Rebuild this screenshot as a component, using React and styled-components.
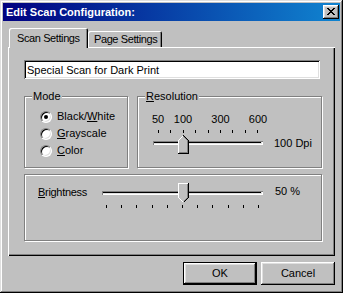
import React from 'react';
import styled, { createGlobalStyle } from 'styled-components';

const GlobalStyle = createGlobalStyle`
  html, body { margin: 0; padding: 0; background: #c0c0c0; }
  body { font-family: "Liberation Sans", Arial, sans-serif; font-size: 11px; color: #000; }
  * { box-sizing: border-box; }
`;

const Window = styled.div`
  width: 343px;
  height: 293px;
  padding: 3px;
  background: #c0c0c0;
  display: flex;
  flex-direction: column;
  box-shadow: inset -1px -1px #000, inset 1px 1px #dfdfdf, inset -2px -2px #808080, inset 2px 2px #fff;
`;

const TitleBar = styled.div`
  height: 18px;
  flex: none;
  display: flex;
  align-items: center;
  justify-content: space-between;
  padding: 0 1px 0 3px;
  background: linear-gradient(90deg, #000080, #1084d0);
`;

const Title = styled.span`
  color: #fff;
  font-weight: bold;
  font-size: 11px;
  line-height: 13px;
`;

const CloseButton = styled.div`
  width: 16px;
  height: 14px;
  background: #c0c0c0;
  display: flex;
  align-items: center;
  justify-content: center;
  padding-bottom: 1px;
  box-shadow: inset -1px -1px #000, inset 1px 1px #fff, inset -2px -2px #808080, inset 2px 2px #dfdfdf;
`;

const Body = styled.div`
  flex: 1;
  display: flex;
  flex-direction: column;
  padding: 7px 5px 5px 5px;
`;

const TabStrip = styled.div`
  height: 19px;
  display: flex;
  align-items: flex-end;
  padding-left: 1px;
  position: relative;
  z-index: 1;
`;

const Tab = styled.div`
  height: ${p => (p.$active ? '20px' : '16px')};
  margin-bottom: ${p => (p.$active ? '-1px' : '0')};
  width: ${p => p.$w}px;
  padding-left: ${p => (p.$active ? '8px' : '6px')};
  display: flex;
  align-items: center;
  white-space: nowrap;
  letter-spacing: -0.4px;
  background: #c0c0c0;
  border-radius: 2px 2px 0 0;
  line-height: 13px;
  box-shadow: inset 1px 1px #fff, inset -1px 0 #000, inset -2px 0 #808080;
`;

const Panel = styled.div`
  height: 209px;
  flex: none;
  display: flex;
  flex-direction: column;
  padding: 13px 13px 0 16px;
  box-shadow: inset 1px 1px #fff, inset -1px -1px #000, inset -2px -2px #808080;
`;

const TextInput = styled.input`
  width: 296px;
  height: 19px;
  border: none;
  outline: none;
  margin: 0;
  padding: 0 3px;
  font: inherit;
  font-size: 11px;
  color: #000;
  background: #fff;
  box-shadow: inset 1px 1px #808080, inset -1px -1px #fff, inset 2px 2px #000, inset -2px -2px #dfdfdf;
`;

const GroupRow = styled.div`
  display: flex;
  gap: 9px;
  margin-top: ${p => p.$mt}px;
  height: ${p => p.$h}px;
`;

const Group = styled.div`
  position: relative;
  flex: ${p => (p.$w ? 'none' : '1')};
  width: ${p => (p.$w ? `${p.$w}px` : 'auto')};
  height: ${p => p.$h}px;
  border: 1px solid #808080;
  box-shadow: inset 1px 1px #fff, 1px 1px #fff;
  padding: ${p => p.$pad};
  display: flex;
  flex-direction: ${p => p.$dir || 'row'};
  align-items: flex-start;
`;

const Legend = styled.span`
  position: absolute;
  top: -7px;
  left: 7px;
  padding: 0 1px;
  line-height: 13px;
  background: #c0c0c0;
`;

const U = styled.span`
  text-decoration: underline;
`;

const RadioRow = styled.div`
  height: 17px;
  display: flex;
  align-items: center;
  gap: 5px;
  line-height: 13px;
`;

const RadioCircle = styled.span`
  position: relative;
  width: 12px;
  height: 12px;
  border-radius: 50%;
  background: #fff;
  border: 1px solid;
  border-color: #808080 #fff #fff #808080;
  box-shadow: inset 1px 1px #000, inset -1px -1px #dfdfdf;
  flex: none;
  &::after {
    content: '';
    display: ${p => (p.$checked ? 'block' : 'none')};
    position: absolute;
    left: 3px;
    top: 3px;
    width: 4px;
    height: 4px;
    border-radius: 50%;
    background: #000;
  }
`;

const SliderColumn = styled.div`
  width: ${p => p.$w}px;
  flex: none;
  display: flex;
  flex-direction: column;
`;

const ScaleLabels = styled.div`
  position: relative;
  height: 13px;
  line-height: 13px;
`;

const ScaleLabel = styled.span`
  position: absolute;
  top: 0;
  transform: translateX(-50%);
  white-space: nowrap;
`;

const Ticks = styled.div`
  height: 3px;
  margin-top: ${p => p.$mt}px;
  padding: 0 ${p => p.$inset}px;
  display: flex;
  justify-content: space-between;
`;

const Tick = styled.span`
  width: 1px;
  height: 3px;
  background: #000;
`;

const TrackArea = styled.div`
  position: relative;
  height: 20px;
  margin-top: ${p => p.$mt || 0}px;
`;

const Track = styled.div`
  height: 4px;
  margin-top: ${p => p.$mt}px;
  background: #000;
  box-shadow: inset 1px 1px #808080, inset -1px -1px #fff, inset -2px -2px #dfdfdf;
`;

const ThumbHolder = styled.div`
  position: absolute;
  top: ${p => p.$top}px;
  display: flex;
`;

const ValueLabel = styled.span`
  margin-left: ${p => p.$ml}px;
  margin-top: ${p => p.$mt}px;
  line-height: 13px;
  white-space: nowrap;
`;

const FieldLabel = styled.span`
  width: 64px;
  flex: none;
  margin-top: 3px;
  line-height: 13px;
  letter-spacing: -0.3px;
`;

const ButtonRow = styled.div`
  display: flex;
  justify-content: flex-end;
  gap: 4px;
  margin-top: 6px;
`;

const Button = styled.div`
  width: 74px;
  height: 23px;
  display: flex;
  align-items: center;
  justify-content: center;
  background: #c0c0c0;
  line-height: 13px;
  border: ${p => (p.$default ? '1px solid #000' : 'none')};
  box-shadow: inset -1px -1px #000, inset 1px 1px #fff, inset -2px -2px #808080, inset 2px 2px #dfdfdf;
`;

const CloseGlyph = () => {
  const px = [
    [0, 0], [1, 0], [6, 0], [7, 0],
    [1, 1], [2, 1], [5, 1], [6, 1],
    [2, 2], [3, 2], [4, 2], [5, 2],
    [3, 3], [4, 3],
    [2, 4], [3, 4], [4, 4], [5, 4],
    [1, 5], [2, 5], [5, 5], [6, 5],
    [0, 6], [1, 6], [6, 6], [7, 6],
  ];
  return (
    <svg width="8" height="7" viewBox="0 0 8 7" shapeRendering="crispEdges">
      {px.map(([x, y]) => (
        <rect key={`${x}-${y}`} x={x} y={y} width="1" height="1" fill="#000" />
      ))}
    </svg>
  );
};

const ThumbUp = () => (
  <svg width="11" height="19" viewBox="0 0 11 19" shapeRendering="crispEdges">
    <path d="M0.5 18.5 V5.5 L5.5 0.5 L10.5 5.5 V18.5 Z" fill="#c0c0c0" />
    <path d="M0.5 18 V5.5 L5.5 0.5" stroke="#fff" fill="none" />
    <path d="M5.5 0.5 L10.5 5.5 V18.5 H0" stroke="#000" fill="none" />
    <path d="M5.5 1.5 L9.5 5.5 V17.5 H1" stroke="#808080" fill="none" />
  </svg>
);

const ThumbDown = () => (
  <svg width="11" height="20" viewBox="0 0 11 20" shapeRendering="crispEdges">
    <path d="M0.5 0.5 H10.5 V14.5 L5.5 19.5 L0.5 14.5 Z" fill="#c0c0c0" />
    <path d="M5.5 19.5 L0.5 14.5 V0.5 H10" stroke="#fff" fill="none" />
    <path d="M10.5 0 V14.5 L5.5 19.5" stroke="#000" fill="none" />
    <path d="M9.5 1 V14.5 L5.5 18.5" stroke="#808080" fill="none" />
  </svg>
);

const Radio = ({ checked, children }) => (
  <RadioRow>
    <RadioCircle $checked={checked} />
    <span>{children}</span>
  </RadioRow>
);

const resTicks = 9;
const resWidth = 110;
const resLabels = [
  { idx: 0, text: '50' },
  { idx: 2, text: '100' },
  { idx: 5, text: '300' },
  { idx: 8, text: '600' },
];
const resTickPos = i => 5 + (i * (resWidth - 10)) / (resTicks - 1);

const brightWidth = 161;
const brightValue = 0.5;

export default function App() {
  const resIndex = 2;
  return (
    <>
      <GlobalStyle />
      <Window>
        <TitleBar>
          <Title>Edit Scan Configuration:</Title>
          <CloseButton>
            <CloseGlyph />
          </CloseButton>
        </TitleBar>
        <Body>
          <TabStrip>
            <Tab $active $w={79}>Scan Settings</Tab>
            <Tab $w={74}>Page Settings</Tab>
          </TabStrip>
          <Panel>
            <TextInput defaultValue="Special Scan for Dark Print" readOnly />
            <GroupRow $mt={17} $h={72}>
              <Group $w={104} $h={72} $pad="11px 0 0 15px" $dir="column">
                <Legend>Mode</Legend>
                <Radio checked>
                  Black/<U>W</U>hite
                </Radio>
                <Radio>
                  <U>G</U>rayscale
                </Radio>
                <Radio>
                  <U>C</U>olor
                </Radio>
              </Group>
              <Group $h={72} $pad="16px 0 0 15px">
                <Legend>
                  <U>R</U>esolution
                </Legend>
                <SliderColumn $w={resWidth}>
                  <ScaleLabels>
                    {resLabels.map(l => (
                      <ScaleLabel key={l.text} style={{ left: `${resTickPos(l.idx)}px` }}>
                        {l.text}
                      </ScaleLabel>
                    ))}
                  </ScaleLabels>
                  <Ticks $mt={4} $inset={5}>
                    {Array.from({ length: resTicks }).map((_, i) => (
                      <Tick key={i} />
                    ))}
                  </Ticks>
                  <TrackArea $mt={1}>
                    <Track $mt={7} />
                    <ThumbHolder $top={1} style={{ left: `${Math.round(resTickPos(resIndex) - 5)}px` }}>
                      <ThumbUp />
                    </ThumbHolder>
                  </TrackArea>
                </SliderColumn>
                <ValueLabel $ml={11} $mt={24}>100 Dpi</ValueLabel>
              </Group>
            </GroupRow>
            <GroupRow $mt={6} $h={67}>
              <Group $h={67} $pad="8px 0 0 13px">
                <FieldLabel>
                  <U>B</U>rightness
                </FieldLabel>
                <SliderColumn $w={brightWidth}>
                  <TrackArea>
                    <Track $mt={8} />
                    <ThumbHolder
                      $top={0}
                      style={{ left: `${Math.round(5 + brightValue * (brightWidth - 10) - 5)}px` }}
                    >
                      <ThumbDown />
                    </ThumbHolder>
                  </TrackArea>
                  <Ticks $mt={2} $inset={4}>
                    {Array.from({ length: 11 }).map((_, i) => (
                      <Tick key={i} />
                    ))}
                  </Ticks>
                </SliderColumn>
                <ValueLabel $ml={12} $mt={2}>50 %</ValueLabel>
              </Group>
            </GroupRow>
          </Panel>
          <ButtonRow>
            <Button $default>OK</Button>
            <Button>Cancel</Button>
          </ButtonRow>
        </Body>
      </Window>
    </>
  );
}
